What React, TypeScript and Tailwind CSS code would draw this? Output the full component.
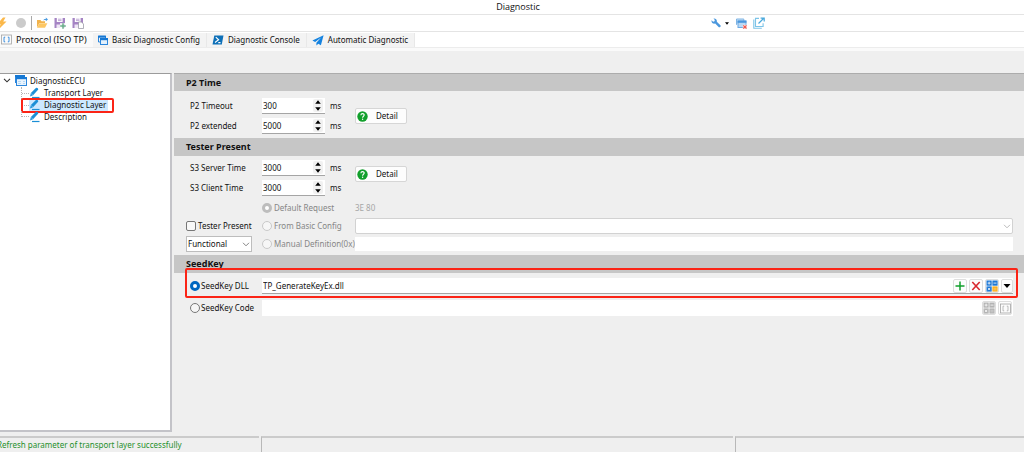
import { useState, type ReactNode } from 'react';

function ProtocolIcon({ className }: { className: string }) {
  return (
    <svg viewBox="0 0 11 11" className={className} fill="none">
      <rect x="0.5" y="1" width="10" height="9" stroke="#a3a3a3" strokeWidth="0.8" fill="#fbfbfb" />
      <path d="M4.2 3.2H3v4.6h1.2M6.8 3.2H8v4.6H6.8" stroke="currentColor" strokeWidth="0.9" />
    </svg>
  );
}

function WindowsIcon() {
  return (
    <svg viewBox="0 0 10 10" className="size-2.5 shrink-0">
      <path d="M0.5 7V1.2h7V3" fill="none" stroke="#2b86dc" />
      <rect x="0" y="0.7" width="8" height="2" fill="#1678d4" />
      <path d="M0.5 7h2" stroke="#2b86dc" />
      <rect x="2.5" y="3.5" width="7" height="6" fill="#e2f0fc" stroke="#2b86dc" />
      <rect x="2" y="3" width="8" height="2.2" fill="#1678d4" />
    </svg>
  );
}

function ConsoleIcon() {
  return (
    <svg viewBox="0 0 12 10" className="h-2.5 w-3 shrink-0">
      <path d="M2.3 0.5h9.2L9.8 9.5H0.5z" fill="#0e70b8" />
      <path d="M3.8 2.2l2.8 2.6-3.6 2.7M6.3 7.6h2.2" fill="none" stroke="#fff" strokeWidth="1.1" />
    </svg>
  );
}

function PlaneIcon() {
  return (
    <svg viewBox="0 0 12 11" className="h-[11px] w-3 shrink-0">
      <path d="M11.6 0.3L0.4 5.6l2.7 1.5 6-4.6-4.7 5.3v2.8l1.9-1.9 2.6 1.6z" fill="#1583e0" />
    </svg>
  );
}

function PencilIcon() {
  return (
    <svg viewBox="0 0 12 12" className="size-3 shrink-0">
      <path d="M1 9.4l0.9-3.3L6.9 1q0.9-0.7 1.9 0.2t0.1 1.9L4 8.3z" fill="#1b8fd6" />
      <path d="M1.9 6.1l2.1 2.2" stroke="#9ed4f5" strokeWidth="0.6" />
      <path d="M3 10.5h7.5" stroke="#1b8fd6" strokeWidth="1.2" />
    </svg>
  );
}

function EcuIcon() {
  return (
    <svg viewBox="0 0 12 11" className="h-[11px] w-3 shrink-0">
      <path d="M0.5 8V0.5h9" fill="none" stroke="#2b86dc" />
      <rect x="0" y="0" width="10" height="2" fill="#1678d4" />
      <rect x="1.5" y="2.5" width="10" height="8" fill="#eaf4fd" stroke="#2b86dc" />
      <rect x="1" y="2" width="11" height="2.2" fill="#1678d4" />
      <path d="M3 6.5h3M8 6.5h2M3 8.5h3M8 8.5h2" stroke="#b4d8f5" />
    </svg>
  );
}

function GridIcon({ a, b }: { a: string; b: string }) {
  return (
    <svg viewBox="0 0 12 12" className="size-3">
      <rect x="0.5" y="0.5" width="5.2" height="5.2" fill={a} />
      <rect x="6.4" y="0.5" width="5.2" height="5.2" fill={a} />
      <rect x="0.5" y="6.4" width="5.2" height="5.2" fill={a} />
      <rect x="6.4" y="6.4" width="5.2" height="5.2" fill={b} />
      <path
        d="M1.6 3.1h3M3.1 1.6v3M7.5 3.1h3M2 7.9l2.2 2.2M4.2 7.9L2 10.1"
        stroke="#fff"
        strokeWidth="0.8"
      />
      <path d="M7.5 8.3h3M7.5 9.8h3" stroke="#fff" strokeWidth="0.5" opacity="0.6" />
    </svg>
  );
}

function SaveIcon({ variant }: { variant: 'add' | 'copy' }) {
  return (
    <svg viewBox="0 0 12 12" className="size-3">
      <path d="M0.5 1h10.5v10H0.5z" fill="#a584c4" />
      <path d="M2.8 1h5.8v4H2.8z" fill="#fff" />
      <path d="M4 2.2h3.5M4 3.6h3.5" stroke="#a584c4" strokeWidth="0.7" />
      <path d="M2.5 7.5h6.5V11H2.5z" fill="#efe6f5" />
      {variant === 'add' ? (
        <>
          <rect x="6" y="6" width="6" height="6" fill="#fff" opacity="0.8" />
          <path d="M9 6.2v5.6M6.2 9h5.6" stroke="#6aae8a" strokeWidth="1.5" />
        </>
      ) : (
        <path d="M6.5 5h3l2 2v4.5h-5z" fill="#fff" stroke="#8f8f9c" strokeWidth="0.7" />
      )}
    </svg>
  );
}

function ToolButton({ label, children }: { label: string; children: ReactNode }) {
  return (
    <button type="button" aria-label={label} className="flex shrink-0 items-center justify-center">
      {children}
    </button>
  );
}

function Toolbar() {
  return (
    <div className="flex h-[17px] items-center border-b border-[#e4e4e4] bg-white">
      <div className="flex w-[69.4%] items-center">
        <div className="-ml-1 flex items-center">
          <ToolButton label="Connect">
            <svg viewBox="0 0 11 12" className="h-3 w-[11px]">
              <path d="M7 0.5L1.5 7h3L3.5 11.5 10.5 4.6H7.2L9.5 0.5z" fill="#fbb84a" />
            </svg>
          </ToolButton>
        </div>
        <div className="ml-[9px] flex items-center gap-1">
          <ToolButton label="Stop">
            <span className="size-2.5 rounded-full bg-[#cbcbcb]" />
          </ToolButton>
          <span className="ml-px h-3.5 w-px bg-[#a8a8a8]" />
          <ToolButton label="Open">
            <svg viewBox="0 0 12 12" className="size-3">
              <path d="M1 3h3.5l1 1.3H9V6H3.5L1 10.6z" fill="#f2b34c" />
              <path d="M1 10.8L3.4 6.2h8L9 10.8z" fill="#fcc765" />
              <path d="M7.2 3.6c0.4-1.5 1.5-1.8 2.6-1.7V0.6L12 2.5 9.8 4.3V3.1c-1 0-1.8 0-2.6 0.5z" fill="#4a9be0" />
            </svg>
          </ToolButton>
        </div>
        <div className="ml-1.5 flex items-center gap-1.5">
          <ToolButton label="Save">
            <SaveIcon variant="add" />
          </ToolButton>
          <ToolButton label="Save as">
            <SaveIcon variant="copy" />
          </ToolButton>
        </div>
      </div>
      <div className="flex items-center gap-1">
        <ToolButton label="Settings">
          <svg viewBox="0 0 10 10" className="size-2.5">
            <path
              d="M0.5 2.2l1.7 1.5 1.3-0.4 0.3-1.3L2.5 0.5C4.3 0 6.3 1.3 5.8 3.7l3.6 3.6c0.9 1-0.7 2.7-1.8 1.8L4.2 5.6C2 6.2 0.2 4.4 0.5 2.2z"
              fill="#4a97dd"
            />
          </svg>
        </ToolButton>
        <ToolButton label="More settings">
          <svg viewBox="0 0 4 3" className="h-[3px] w-1">
            <path d="M0 0.3h4L2 2.8z" fill="#000" />
          </svg>
        </ToolButton>
      </div>
      <div className="ml-[7px] flex items-center gap-1.5">
        <ToolButton label="Close windows">
          <svg viewBox="0 0 11 11" className="size-[11px]">
            <path d="M0.5 6.8V1h7.3v2" fill="#c9e0f5" stroke="#7fb4e4" />
            <rect x="2" y="3" width="8" height="6.5" fill="#b9d9f5" stroke="#6daae3" />
            <rect x="1.6" y="2.6" width="8.8" height="2.2" fill="#4a97dd" />
            <rect x="6.8" y="6.8" width="4.2" height="4.2" fill="#fbe3e1" />
            <path d="M7.3 7.3l3.2 3.2M10.5 7.3l-3.2 3.2" stroke="#ee5a50" strokeWidth="1.1" />
          </svg>
        </ToolButton>
        <ToolButton label="Detach">
          <svg viewBox="0 0 12 12" className="size-3" fill="none" stroke="#7cc4e8">
            <path d="M6 1.4H2.5v8.1h7.6V6.2" strokeWidth="1.1" />
            <path d="M0.8 2.6v8.7h8" strokeWidth="1.1" />
            <path d="M5.5 6.5l5-5M7.6 1.1h3.6v3.5" stroke="#48a8dc" strokeWidth="1.2" />
          </svg>
        </ToolButton>
      </div>
    </div>
  );
}

const TABS: { label: string; icon: ReactNode }[] = [
  { label: 'Basic Diagnostic Config', icon: <WindowsIcon /> },
  { label: 'Diagnostic Console', icon: <ConsoleIcon /> },
  { label: 'Automatic Diagnostic', icon: <PlaneIcon /> },
];

function Tabs() {
  return (
    <div role="tablist" className="flex h-4 items-end border-b border-[#ececec] bg-white">
      <button
        type="button"
        role="tab"
        aria-selected="true"
        className="flex h-full w-[93px] shrink-0 items-center gap-1 whitespace-nowrap bg-[#fafafa] pl-px text-[9px]"
      >
        <ProtocolIcon className="size-[11px] shrink-0 text-[#2b86dc]" />
        Protocol (ISO TP)
      </button>
      {TABS.map((tab) => (
        <button
          key={tab.label}
          type="button"
          role="tab"
          aria-selected="false"
          className="flex h-3.5 shrink-0 items-center gap-1 whitespace-nowrap border-r border-[#e8e8e8] bg-[#f3f3f3] pr-1.5 pl-[5px]"
        >
          {tab.icon}
          {tab.label}
        </button>
      ))}
    </div>
  );
}

function Tree() {
  const items = ['Transport Layer', 'Diagnostic Layer', 'Description'];
  return (
    <nav
      aria-label="Diagnostic tree"
      className="w-[172px] shrink-0 border-t border-r-2 border-b-2 border-[#c3c3c8] border-t-[#9b9b9b] bg-white"
    >
      <div className="flex h-[13px] items-center">
        <svg viewBox="0 0 8 5" className="mr-1 ml-[3px] h-[5px] w-2" fill="none">
          <path d="M1 0.8l3 3 3-3" stroke="#333" strokeWidth="1.1" />
        </svg>
        <EcuIcon />
        <span className="ml-[3px]">DiagnosticECU</span>
      </div>
      <ul className="ml-[21px]">
        {items.map((item, i) => (
          <li key={item} className="relative flex h-3 items-center">
            <span
              className={
                i === items.length - 1
                  ? 'h-1.5 w-2 self-start border-b border-l border-dotted border-[#b5b5b5]'
                  : 'flex h-3 w-2 items-center border-l border-dotted border-[#b5b5b5]'
              }
            >
              {i < items.length - 1 && <span className="w-full border-t border-dotted border-[#b5b5b5]" />}
            </span>
            <a
              href={'#' + item.toLowerCase().replace(' ', '-')}
              className={
                i === 1 ? 'flex h-3 items-center gap-[3px] bg-[#cce8ff] pr-0.5' : 'flex h-3 items-center gap-[3px]'
              }
            >
              <PencilIcon />
              {item}
            </a>
            {i === 1 && (
              <span className="pointer-events-none absolute -top-px left-0 h-[15px] w-[93px] rounded-xs border-2 border-[#fb2416]" />
            )}
          </li>
        ))}
      </ul>
    </nav>
  );
}

function SectionHeader({ first = false, children }: { first?: boolean; children: ReactNode }) {
  return (
    <h2
      className={
        'flex h-[18px] items-center bg-[#c6c6c6] pl-3 text-[9px] font-bold text-[#111] ' +
        (first ? 'border-t border-[#acacac]' : '')
      }
    >
      {children}
    </h2>
  );
}

function NumberRow({ id, label, initial }: { id: string; label: string; initial: number }) {
  const [value, setValue] = useState(initial);
  return (
    <div className="flex h-4 items-center">
      <label htmlFor={id} className="w-[72px] shrink-0">
        {label}
      </label>
      <div className="flex h-4 w-[63px] items-center border-b border-[#a5a5a5] bg-white pr-0.5 pl-px">
        <input
          id={id}
          type="text"
          inputMode="numeric"
          value={value}
          onChange={(e) => setValue(Number(e.target.value) || 0)}
          className="min-w-0 flex-1 bg-transparent outline-none"
        />
        <div className="flex w-2.5 flex-col gap-px rounded-xs bg-[#f1f1f1]">
          <button
            type="button"
            aria-label={'Increase ' + label}
            onClick={() => setValue(value + 1)}
            className="flex h-1.5 items-center justify-center"
          >
            <svg viewBox="0 0 6 4" className="h-1 w-1.5">
              <path d="M3 0.3l2.8 3.4H0.2z" fill="#000" />
            </svg>
          </button>
          <button
            type="button"
            aria-label={'Decrease ' + label}
            onClick={() => setValue(value - 1)}
            className="flex h-1.5 items-center justify-center"
          >
            <svg viewBox="0 0 6 4" className="h-1 w-1.5">
              <path d="M0.2 0.3h5.6L3 3.7z" fill="#000" />
            </svg>
          </button>
        </div>
      </div>
      <span className="ml-[5px] w-3">ms</span>
    </div>
  );
}

function DetailButton() {
  return (
    <button
      type="button"
      className="flex h-4 w-[52px] items-center gap-2 rounded-xs border border-[#d6d6d6] bg-[#fdfdfd] pl-px"
    >
      <svg viewBox="0 0 11 11" className="size-[11px]">
        <circle cx="5.5" cy="5.5" r="5.2" fill="#12a02c" />
        <path d="M3.9 4.2c0-2.2 3.3-2.1 3.3-0.1 0 1.2-1.6 1.2-1.6 2.6" fill="none" stroke="#fff" strokeWidth="1.1" />
        <circle cx="5.6" cy="8.3" r="0.7" fill="#fff" />
      </svg>
      Detail
    </button>
  );
}

const RADIO = 'size-2.5 shrink-0 appearance-none rounded-full border';

function RequestOptions() {
  return (
    <div className="grid grid-cols-[76px_93px_1fr] gap-y-0.5 pt-1 pr-[11px] pb-[3px] pl-3 text-[#868686]">
      <div />
      <label className="flex h-4 items-center gap-0.5 whitespace-nowrap">
        <input
          type="radio"
          name="request"
          defaultChecked
          disabled
          className={RADIO + ' border-[3px] border-[#bdbdbd] bg-white'}
        />
        Default Request
      </label>
      <output className="flex h-4 items-center text-[#a6a6a6]">3E 80</output>

      <label className="flex h-4 items-center gap-0.5 whitespace-nowrap text-[#111]">
        <input
          type="checkbox"
          className="size-2.5 shrink-0 appearance-none rounded-xs border border-[#777] bg-[#f8f8f8] checked:bg-[#005fb8]"
        />
        Tester Present
      </label>
      <label className="flex h-4 items-center gap-0.5 whitespace-nowrap">
        <input type="radio" name="request" disabled className={RADIO + ' border-[#c9c9c9] bg-[#f6f6f6]'} />
        From Basic Config
      </label>
      <div className="relative flex h-4 items-center">
        <select
          disabled
          aria-label="Basic config request"
          className="h-4 w-full appearance-none rounded-xs border border-[#d2d2d2] bg-white"
        />
        <svg viewBox="0 0 8 5" className="pointer-events-none absolute right-0.5 h-[5px] w-2" fill="none">
          <path d="M1 0.8l3 3 3-3" stroke="#bbb" />
        </svg>
      </div>

      <div className="relative flex h-4 w-[66px] items-center text-[#111]">
        <select
          aria-label="Addressing"
          className="h-4 w-full appearance-none border border-[#bdbdbd] bg-white pl-px"
        >
          <option>Functional</option>
          <option>Physical</option>
        </select>
        <svg viewBox="0 0 8 5" className="pointer-events-none absolute right-0.5 h-[5px] w-2" fill="none">
          <path d="M1 0.8l3 3 3-3" stroke="#777" strokeWidth="0.9" />
        </svg>
      </div>
      <label className="flex h-4 items-center gap-0.5 whitespace-nowrap">
        <input type="radio" name="request" disabled className={RADIO + ' border-[#c9c9c9] bg-[#f6f6f6]'} />
        Manual Definition(0x)
      </label>
      <input
        type="text"
        disabled
        aria-label="Manual definition"
        className="h-3.5 w-full self-center bg-white px-0.5"
      />
    </div>
  );
}

function SeedKey() {
  const [mode, setMode] = useState('dll');
  const radio = (value: string) =>
    mode === value ? RADIO + ' border-[3px] border-[#0067c0] bg-white' : RADIO + ' border-[#777] bg-[#f6f6f6]';
  const tool = 'flex h-3.5 shrink-0 items-center justify-center rounded-xs border border-[#dedede] bg-[#fdfdfd]';
  return (
    <div className="relative flex flex-col gap-1.5 pt-[5px] pr-[11px] pl-4">
      <div className="flex h-4 items-center">
        <label className="flex w-[72px] shrink-0 items-center gap-px whitespace-nowrap">
          <input
            type="radio"
            name="seedkey"
            checked={mode === 'dll'}
            onChange={() => setMode('dll')}
            className={radio('dll')}
          />
          SeedKey DLL
        </label>
        <div className="flex h-4 flex-1 items-center gap-0.5 border-b border-[#a5a5a5] bg-white pl-px">
          <input
            type="text"
            aria-label="SeedKey DLL file"
            defaultValue="TP_GenerateKeyEx.dll"
            className="min-w-0 flex-1 bg-transparent outline-none"
          />
          <button type="button" aria-label="Add" className={tool + ' w-3.5'}>
            <svg viewBox="0 0 10 10" className="size-2.5">
              <path d="M5 0.5v9M0.5 5h9" stroke="#12a02c" strokeWidth="1.5" />
            </svg>
          </button>
          <button type="button" aria-label="Remove" className={tool + ' w-3.5'}>
            <svg viewBox="0 0 10 10" className="size-2.5">
              <path d="M1.3 1l7.4 8M8.7 1L1.3 9" stroke="#d8282f" strokeWidth="1.6" />
            </svg>
          </button>
          <button type="button" aria-label="Calculate" className={tool + ' w-3.5'}>
            <GridIcon a="#1d78d6" b="#fbae1c" />
          </button>
          <button type="button" aria-label="More" className={tool + ' w-3'}>
            <svg viewBox="0 0 8 4" className="h-1 w-2">
              <path d="M0.5 0h7L4 4z" fill="#000" />
            </svg>
          </button>
        </div>
      </div>
      <div className="flex h-4 items-center">
        <label className="flex w-[72px] shrink-0 items-center gap-px whitespace-nowrap">
          <input
            type="radio"
            name="seedkey"
            checked={mode === 'code'}
            onChange={() => setMode('code')}
            className={radio('code')}
          />
          SeedKey Code
        </label>
        <div className="flex h-4 flex-1 items-center gap-0.5 bg-white pr-px pl-px">
          <input type="text" aria-label="SeedKey code file" className="min-w-0 flex-1 bg-transparent outline-none" />
          <button type="button" aria-label="Calculate code" className={tool + ' w-3.5'}>
            <GridIcon a="#b4b4b4" b="#b4b4b4" />
          </button>
          <button type="button" aria-label="Edit code" className={tool + ' w-3.5'}>
            <ProtocolIcon className="size-[11px] text-[#b4b4b4]" />
          </button>
        </div>
      </div>
      <span className="pointer-events-none absolute -top-[5px] right-1.5 left-[11px] h-[30px] rounded-xs border-2 border-[#fb2416]" />
    </div>
  );
}

export default function App() {
  return (
    <div className="flex min-h-screen flex-col bg-[#efefef] font-['Noto_Sans',sans-serif] text-[8px] leading-3 text-[#111]">
      <header className="flex h-[15px] items-center justify-center border-b border-[#e4e4e4] bg-white pl-3">
        <h1 className="font-['Open_Sans',sans-serif] text-[9px]">Diagnostic</h1>
      </header>
      <Toolbar />
      <Tabs />
      <div className="h-[3px] bg-[#fafafa]" />
      <div className="h-[22px]" />
      <main className="flex flex-1">
        <Tree />
        <div className="ml-0.5 min-w-0 flex-1">
          <section>
            <SectionHeader first>P2 Time</SectionHeader>
            <div className="flex gap-[13px] pt-[7px] pb-1 pl-4">
              <div className="flex flex-col gap-1">
                <NumberRow id="p2-timeout" label="P2 Timeout" initial={300} />
                <NumberRow id="p2-extended" label="P2 extended" initial={5000} />
              </div>
              <div className="pt-2.5">
                <DetailButton />
              </div>
            </div>
          </section>
          <section>
            <SectionHeader>Tester Present</SectionHeader>
            <div className="flex gap-[13px] pt-1 pl-4">
              <div className="flex flex-col gap-1">
                <NumberRow id="s3-server" label="S3 Server Time" initial={3000} />
                <NumberRow id="s3-client" label="S3 Client Time" initial={3000} />
              </div>
              <div className="pt-1.5">
                <DetailButton />
              </div>
            </div>
            <RequestOptions />
          </section>
          <section>
            <SectionHeader>SeedKey</SectionHeader>
            <SeedKey />
          </section>
        </div>
      </main>
      <footer className="mt-1 grid h-4 grid-cols-[25.3%_46.1%_1fr] gap-x-0.5">
        <p
          role="status"
          className="flex items-center whitespace-nowrap border-t-2 border-[#cbcbcb] text-[#1f8f2c]"
        >
          <span className="-ml-[3px]">Refresh parameter of transport layer successfully</span>
        </p>
        <div className="border-t-2 border-l border-[#cbcbcb] border-l-[#b8b8b8]" />
        <div className="border-t-2 border-l border-[#cbcbcb] border-l-[#b8b8b8]" />
      </footer>
    </div>
  );
}
